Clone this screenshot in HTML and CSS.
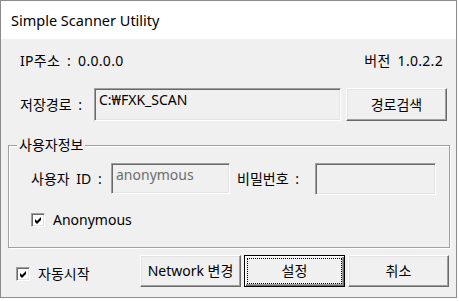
FILE: index.html
```html
<!DOCTYPE html>
<html lang="ko">
<head>
<meta charset="utf-8">
<title>Simple Scanner Utility</title>
<link rel="stylesheet" href="styles.css">
</head>
<body>
<div class="window">
  <div class="titlebar">Simple Scanner Utility</div>
  <div class="client">
    <div class="row info">
      <span>IP주소 : 0.0.0.0</span>
      <span>버전 1.0.2.2</span>
    </div>
    <div class="row path">
      <span class="lbl lbl-path">저장경로 :</span>
      <div class="field field-path">C:₩FXK_SCAN</div>
      <button class="btn">경로검색</button>
    </div>
    <div class="group">
      <div class="legend">사용자정보</div>
      <div class="row creds">
        <span class="lbl lbl-id">사용자 ID :</span>
        <div class="field field-id muted">anonymous</div>
        <span class="lbl lbl-pw">비밀번호 :</span>
        <div class="field field-pw"></div>
      </div>
      <div class="check-row anon">
        <span class="check"><svg width="7" height="7" viewBox="0 0 7 7"><polygon points="0,2 2,4 6,0 6,3 2,7 0,5" fill="#000"/></svg></span>
        <span>Anonymous</span>
      </div>
    </div>
    <div class="row actions">
      <div class="check-row auto">
        <span class="check"><svg width="7" height="7" viewBox="0 0 7 7"><polygon points="0,2 2,4 6,0 6,3 2,7 0,5" fill="#000"/></svg></span>
        <span>자동시작</span>
      </div>
      <button class="btn">Network 변경</button>
      <button class="btn default"><span class="focus">설정</span></button>
      <button class="btn">취소</button>
    </div>
  </div>
</div>
</body>
</html>
```
FILE: styles.css
```css
* { box-sizing: border-box; }
html, body { margin: 0; padding: 0; background: #ffffff; }
body {
  font-family: "Noto Sans", "Noto Sans CJK KR", sans-serif;
  font-size: 14px;
  line-height: 16px;
  color: #000;
}
.window {
  width: 457px;
  height: 298px;
  border: 1px solid #8c8c8c;
  display: flex;
  flex-direction: column;
  background: #f0f0f0;
}
.titlebar {
  height: 38px;
  background: #ffffff;
  font-size: 14.5px;
  line-height: 38px;
  padding-left: 10px;
  color: #000;
}
.client {
  flex: 1;
  display: flex;
  flex-direction: column;
  background: #f0f0f0;
}
.row { display: flex; align-items: center; }
.info {
  margin: 14px 13px 0 19px;
  height: 16px;
  justify-content: space-between;
  word-spacing: 3px;
  letter-spacing: 0.3px;
}
.lbl { word-spacing: 3px; }
.path {
  margin: 19px 0 0 19px;
  height: 33px;
}
.lbl-path { width: 74px; }
.field {
  height: 100%;
  border: 1px solid;
  border-color: #a0a0a0 #ffffff #ffffff #a0a0a0;
  box-shadow: inset 1px 1px 0 #696969, inset -1px -1px 0 #e3e3e3;
  background: #f0f0f0;
  padding: 3px 0 0 4px;
  white-space: nowrap;
}
.field-path { width: 247px; }
.path .btn { margin-left: 5px; height: 33px; }
.btn {
  width: 101px;
  height: 32px;
  font: inherit;
  color: #000;
  background: #f0f0f0;
  border: 1px solid;
  border-color: #ffffff #696969 #696969 #ffffff;
  box-shadow: inset -1px -1px 0 #a0a0a0, inset 1px 1px 0 #e3e3e3;
  padding: 0;
  margin: 0;
}
.btn.default {
  border: 1px solid #000;
  box-shadow: inset 1px 1px 0 #ffffff, inset -1px -1px 0 #696969, inset -2px -2px 0 #a0a0a0;
  padding: 3px;
}
.focus {
  display: flex;
  align-items: center;
  justify-content: center;
  height: 100%;
  outline: 1px dotted #000;
}
.group {
  margin: 24px 0 0 7px;
  width: 442px;
  height: 103px;
  border: 1px solid #a0a0a0;
  box-shadow: inset 1px 1px 0 #ffffff, 1px 1px 0 #ffffff;
  display: flex;
  flex-direction: column;
}
.legend {
  align-self: flex-start;
  margin: -9px 0 0 8px;
  padding: 0 2px;
  background: #f0f0f0;
  line-height: 16px;
}
.creds {
  margin: 10px 0 0 22px;
  height: 31px;
}
.lbl-id { width: 80px; }
.field-id { width: 119px; margin-right: 7px; }
.lbl-pw { width: 78px; }
.field-pw { width: 121px; height: 32px; }
.muted { color: #6d6d6d; }
.check-row {
  display: flex;
  align-items: center;
  height: 16px;
  gap: 8px;
}
.anon { margin: 18px 0 0 22px; }
.check {
  width: 14px;
  height: 14px;
  border: 1px solid;
  border-color: #a0a0a0 #ffffff #ffffff #a0a0a0;
  box-shadow: inset 1px 1px 0 #696969, inset -1px -1px 0 #e3e3e3;
  background: #ffffff;
  display: flex;
  align-items: center;
  justify-content: center;
}
.actions {
  margin: 7px 0 0 15px;
  height: 32px;
  align-items: flex-start;
  gap: 3px;
}
.auto {
  width: 121px;
  margin-top: 11px;
}
```
